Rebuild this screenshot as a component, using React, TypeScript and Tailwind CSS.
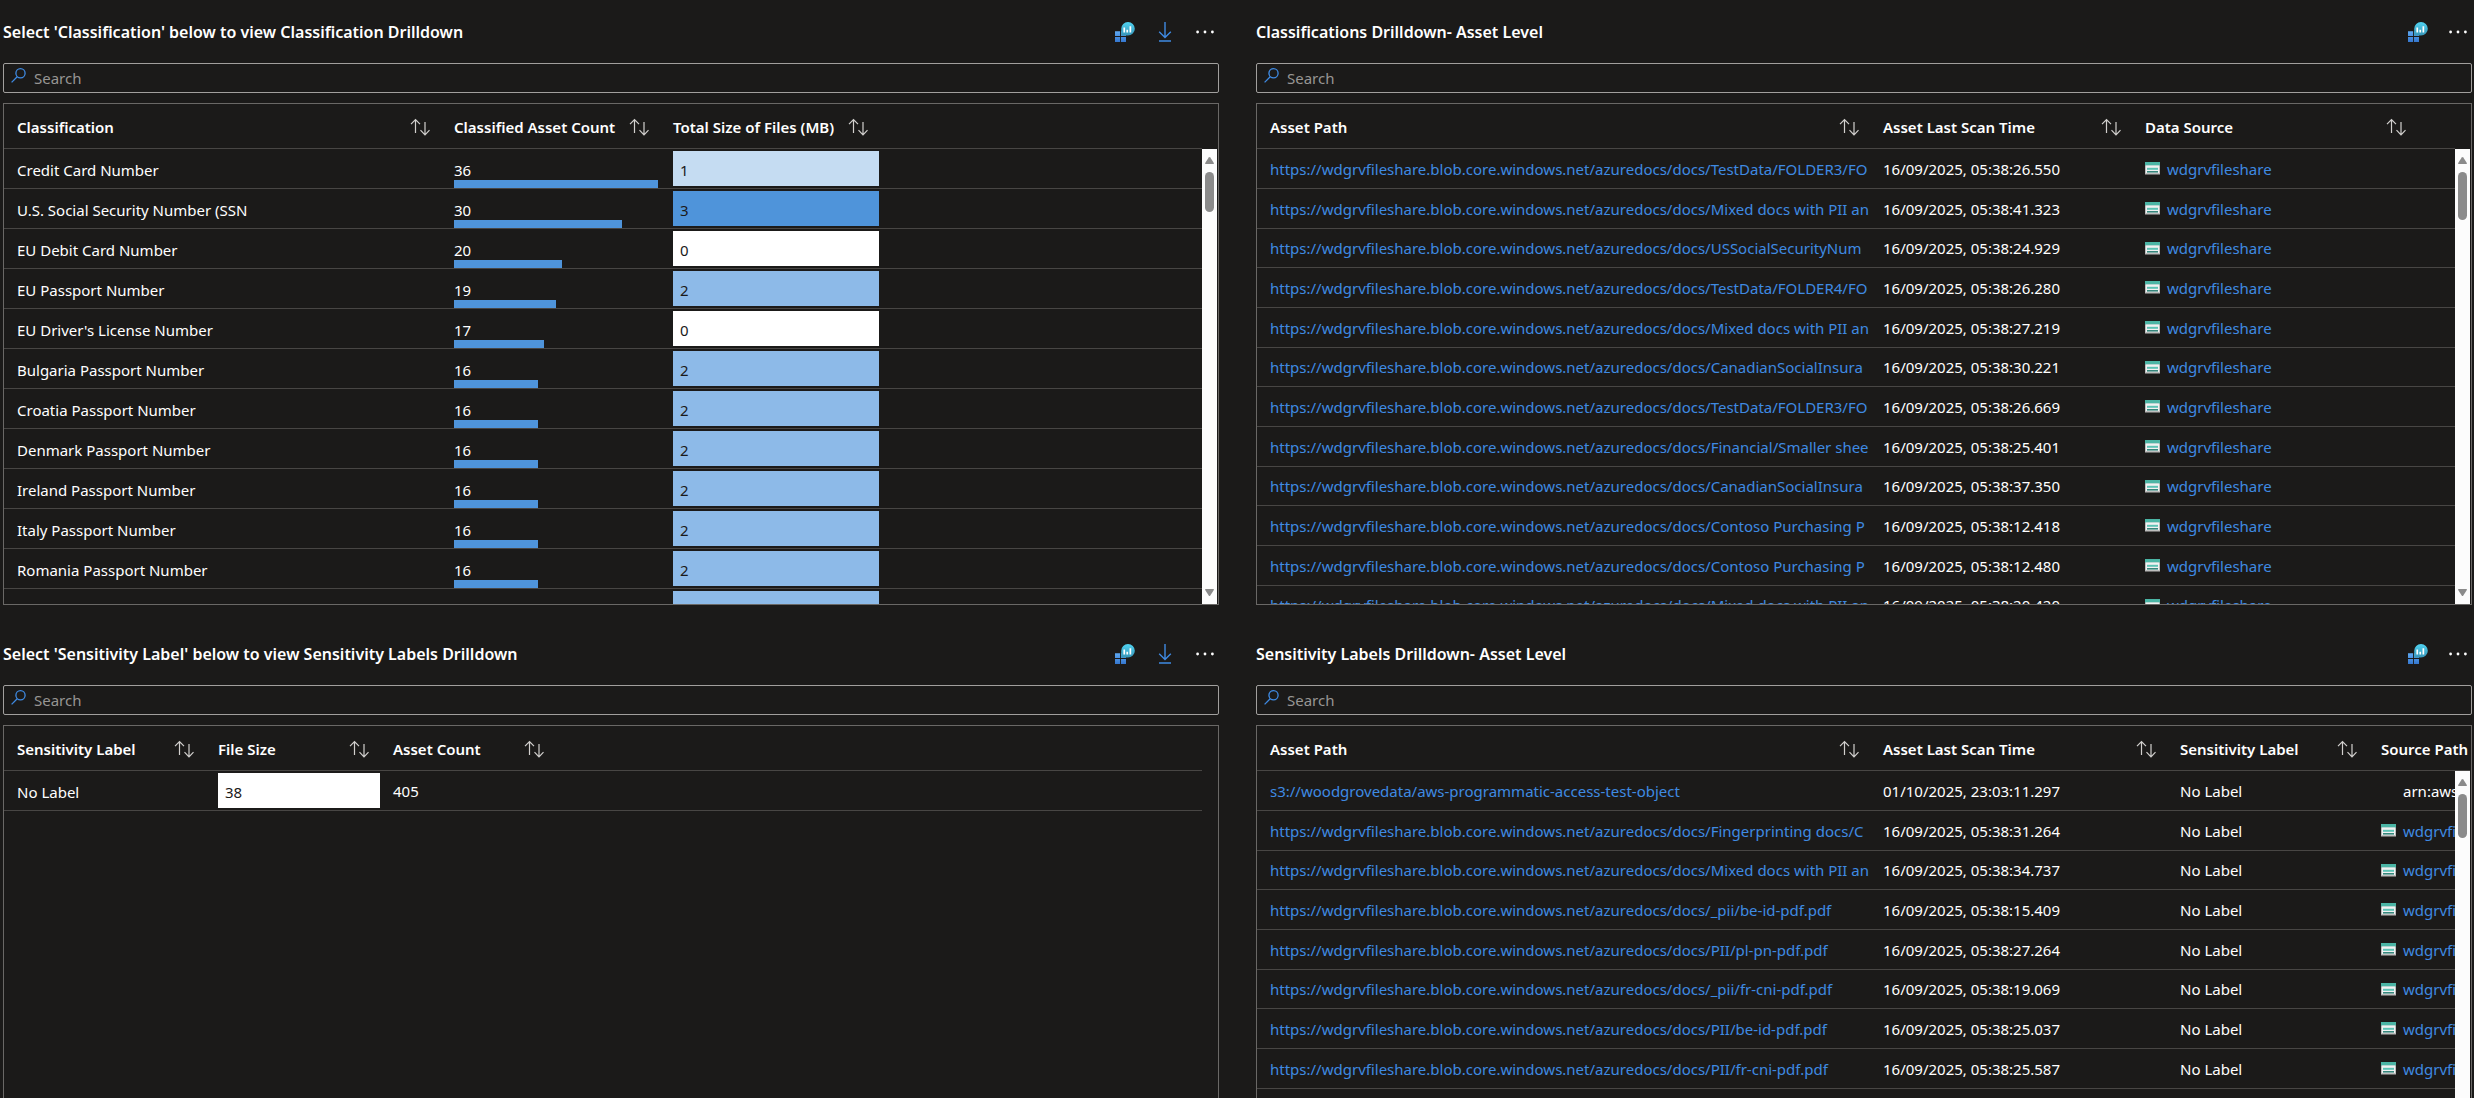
import type { ReactNode } from "react";

const BLOB = "https://wdgrvfileshare.blob.core.windows.net/azuredocs/docs/";

const classifications = [
  { name: "Credit Card Number", count: 36, size: 1 },
  { name: "U.S. Social Security Number (SSN", count: 30, size: 3 },
  { name: "EU Debit Card Number", count: 20, size: 0 },
  { name: "EU Passport Number", count: 19, size: 2 },
  { name: "EU Driver's License Number", count: 17, size: 0 },
  { name: "Bulgaria Passport Number", count: 16, size: 2 },
  { name: "Croatia Passport Number", count: 16, size: 2 },
  { name: "Denmark Passport Number", count: 16, size: 2 },
  { name: "Ireland Passport Number", count: 16, size: 2 },
  { name: "Italy Passport Number", count: 16, size: 2 },
  { name: "Romania Passport Number", count: 16, size: 2 },
];

const classifiedAssets = [
  { path: "TestData/FOLDER3/FO", time: "16/09/2025, 05:38:26.550" },
  { path: "Mixed docs with PII an", time: "16/09/2025, 05:38:41.323" },
  { path: "USSocialSecurityNum", time: "16/09/2025, 05:38:24.929" },
  { path: "TestData/FOLDER4/FO", time: "16/09/2025, 05:38:26.280" },
  { path: "Mixed docs with PII an", time: "16/09/2025, 05:38:27.219" },
  { path: "CanadianSocialInsura", time: "16/09/2025, 05:38:30.221" },
  { path: "TestData/FOLDER3/FO", time: "16/09/2025, 05:38:26.669" },
  { path: "Financial/Smaller shee", time: "16/09/2025, 05:38:25.401" },
  { path: "CanadianSocialInsura", time: "16/09/2025, 05:38:37.350" },
  { path: "Contoso Purchasing P", time: "16/09/2025, 05:38:12.418" },
  { path: "Contoso Purchasing P", time: "16/09/2025, 05:38:12.480" },
  { path: "Mixed docs with PII an", time: "16/09/2025, 05:38:20.420" },
];

const labelledAssets = [
  { path: "Fingerprinting docs/C", time: "16/09/2025, 05:38:31.264" },
  { path: "Mixed docs with PII an", time: "16/09/2025, 05:38:34.737" },
  { path: "_pii/be-id-pdf.pdf", time: "16/09/2025, 05:38:15.409" },
  { path: "PII/pl-pn-pdf.pdf", time: "16/09/2025, 05:38:27.264" },
  { path: "_pii/fr-cni-pdf.pdf", time: "16/09/2025, 05:38:19.069" },
  { path: "PII/be-id-pdf.pdf", time: "16/09/2025, 05:38:25.037" },
  { path: "PII/fr-cni-pdf.pdf", time: "16/09/2025, 05:38:25.587" },
];

const heat = ["bg-white", "bg-[#c5dcf2]", "bg-[#8dbae8]", "bg-[#4f94da]"];

function SortIcon() {
  return (
    <svg width="20" height="18" viewBox="0 0 20 18" fill="none" stroke="#d2d0ce" strokeWidth="1.2">
      <path d="M5.5 15V2M1 6.2 5.5 1.5 10 6.2" />
      <path d="M15 4v12.6M10.5 12.2 15 16.8l4.500-4.600" />
    </svg>
  );
}

function InsightsIcon() {
  return (
    <svg width="20" height="20" viewBox="0 0 20 20">
      <defs>
        <linearGradient id="bubble" x1="0" y1="0" x2="0" y2="1">
          <stop offset="0" stopColor="#50d4f2" />
          <stop offset="1" stopColor="#3795b8" />
        </linearGradient>
        <linearGradient id="tiles" x1="0" y1="0" x2="0" y2="1">
          <stop offset="0" stopColor="#5ea9f2" />
          <stop offset="1" stopColor="#3577cf" />
        </linearGradient>
      </defs>
      <path d="M0 9.200h5.100v4.900H0zM6 9.200h5v4.900H6zM0 15h5.100v5H0zM6 15h5v5H6z" fill="url(#tiles)" />
      <path d="M13 0a6.800 6.800 0 1 1 0 13.600H7.200c-.8 0-1.100-.5-1-1.200V6.800A6.800 6.800 0 0 1 13 0z" fill="url(#bubble)" />
      <path d="M8.400 5.600h1.700v5H8.400zM11.400 7.800h1.700v2.800h-1.700zM14.500 4.200h1.700v6.400h-1.700z" fill="#fff" />
    </svg>
  );
}

function DownloadIcon() {
  return (
    <svg width="14" height="20" viewBox="0 0 14 20" fill="none" stroke="#3f8ae2" strokeWidth="1.4">
      <path d="M7 0v15.500M1.200 9.800 7 15.600l5.800-5.800M1 19h12" />
    </svg>
  );
}

function MoreIcon() {
  return (
    <svg width="18" height="20" viewBox="0 0 18 20" fill="#fff">
      <circle cx="1.600" cy="10" r="1.400" />
      <circle cx="9" cy="10" r="1.400" />
      <circle cx="16.400" cy="10" r="1.400" />
    </svg>
  );
}

function StorageIcon() {
  return (
    <svg width="15" height="13" viewBox="0 0 15 13" className="shrink-0">
      <path d="M0 0h15v12.500H0z" fill="#bdbdbd" />
      <path d="M0 0h15v3.500H0z" fill="#4bb5a5" />
      <path d="M1 3.500h13v7.500H1z" fill="#f0f2f2" />
      <path d="M2 5.800h11v2H2z" fill="#5cc2b4" />
      <path d="M2 9h11v1.600H2z" fill="#37867c" />
    </svg>
  );
}

function Panel({ title, download, children }: { title: string; download?: boolean; children: ReactNode }) {
  return (
    <section className="flex min-w-0 flex-col">
      <header className="flex h-[63px] items-center justify-between pr-1">
        <h2 className="text-base font-semibold whitespace-nowrap">{title}</h2>
        <div className="flex gap-5">
          <button aria-label="Open in workbook" className="flex size-5 items-center justify-center"><InsightsIcon /></button>
          {download && (
            <button aria-label="Export" className="flex size-5 items-center justify-center"><DownloadIcon /></button>
          )}
          <button aria-label="More options" className="flex size-5 items-center justify-center"><MoreIcon /></button>
        </div>
      </header>
      <label className="flex h-[30px] items-center gap-2 rounded-xs border border-[#a19f9d] px-[7px]">
        <svg width="15" height="15" viewBox="0 0 15 15" fill="none" stroke="#3f8ae2" strokeWidth="1.300" className="mb-1.5 shrink-0">
          <circle cx="9.500" cy="5.300" r="4.600" />
          <path d="M6.200 8.700.6 14.400" />
        </svg>
        <input
          type="text"
          aria-label="Search"
          placeholder="Search"
          className="min-w-0 flex-1 bg-transparent text-[15px] leading-5 outline-none placeholder:text-[#979593]"
        />
      </label>
      <div className="relative mt-[10px] h-[502px] overflow-hidden border border-[#6a6866]">{children}</div>
    </section>
  );
}

type Column = { label: string; width?: string; sort?: boolean };

function Grid({ columns, wide, children }: { columns: Column[]; wide?: boolean; children: ReactNode }) {
  return (
    <div className={wide ? "mr-px" : "mr-4"}>
      <table className="w-full table-fixed border-separate border-spacing-0 text-[15px] leading-5">
        <thead>
          <tr>
            {columns.map((c, i) => (
              <th key={i} scope="col" className={`h-[45px] border-b border-[#484644] p-0 text-left font-semibold ${c.width ?? ""}`}>
                <div className="flex items-center justify-between pt-0.5 pr-[11px] pl-[13px] whitespace-nowrap">
                  {c.label}
                  {c.sort !== false && <button aria-label={`Sort by ${c.label}`}><SortIcon /></button>}
                </div>
              </th>
            ))}
          </tr>
        </thead>
        <tbody>{children}</tbody>
      </table>
    </div>
  );
}

function Cell({ children }: { children?: ReactNode }) {
  return <td className="h-10 overflow-hidden border-b border-[#484644] py-0 pr-0 pl-[13px] whitespace-nowrap">{children}</td>;
}

function TightRow({ children }: { children: ReactNode }) {
  return <tr className="nth-[3n]:*:h-[39px]">{children}</tr>;
}

function Link({ children }: { children: ReactNode }) {
  return <a href="#" className="text-[#3f8ae2]">{children}</a>;
}

function Source() {
  return (
    <div className="flex items-center gap-[7px]">
      <StorageIcon />
      <Link>wdgrvfileshare</Link>
    </div>
  );
}

function HeatCell({ value, tone }: { value?: ReactNode; tone: string }) {
  return <div className={`flex h-[35px] items-center pt-0.5 pl-[7px] text-[#1b1a19] ${tone}`}>{value}</div>;
}

function CountBar({ count }: { count: number }) {
  return (
    <div className="flex h-[38px] flex-col justify-end">
      <span>{count}</span>
      <div className="h-2 bg-[#4f94da]" style={{ width: count * 6 - 12 }} />
    </div>
  );
}

function Scrollbar({ thumb }: { thumb: string }) {
  return (
    <div aria-hidden="true" className="absolute top-[45px] right-px bottom-0 flex w-[15px] flex-col items-center justify-between bg-[#fcfcfc] py-2">
      <div className="flex flex-col items-center gap-2">
        <svg width="9" height="7" viewBox="0 0 9 7" fill="#8b8b8b"><path d="M3.700.6a1 1 0 0 1 1.600 0L9 6.200q0 .8-.8.8H.8Q0 7 0 6.200z" /></svg>
        <div className={`w-[9px] rounded-full bg-[#8b8b8b] ${thumb}`} />
      </div>
      <svg width="9" height="7" viewBox="0 0 9 7" fill="#8b8b8b"><path d="M3.700 6.400a1 1 0 0 0 1.600 0L9 .8Q9 0 8.200 0H.8Q0 0 0 .8z" /></svg>
    </div>
  );
}

export default function App() {
  return (
    <main className="grid h-screen auto-rows-max grid-cols-2 gap-x-[37px] gap-y-[17px] overflow-hidden bg-[#1b1a19] pr-[2px] pl-[3px] font-['Noto_Sans',sans-serif] text-white">
      <Panel title="Select 'Classification' below to view Classification Drilldown" download>
        <Grid
          columns={[
            { label: "Classification", width: "w-[437px]" },
            { label: "Classified Asset Count", width: "w-[219px]" },
            { label: "Total Size of Files (MB)", width: "w-[219px]" },
            { label: "", sort: false },
          ]}
        >
          {classifications.map((r) => (
            <tr key={r.name}>
              <Cell><div className="pt-0.5">{r.name}</div></Cell>
              <Cell><CountBar count={r.count} /></Cell>
              <Cell><HeatCell value={r.size} tone={heat[r.size]} /></Cell>
              <Cell />
            </tr>
          ))}
          <tr>
            <Cell />
            <Cell />
            <Cell><HeatCell tone={heat[2]} /></Cell>
            <Cell />
          </tr>
        </Grid>
        <Scrollbar thumb="h-10" />
      </Panel>

      <Panel title="Classifications Drilldown- Asset Level">
        <Grid
          columns={[
            { label: "Asset Path", width: "w-[613px]" },
            { label: "Asset Last Scan Time", width: "w-[262px]" },
            { label: "Data Source", width: "w-[285px]" },
            { label: "", sort: false },
          ]}
        >
          {classifiedAssets.map((r, i) => (
            <TightRow key={i}>
              <Cell><Link>{BLOB + r.path}</Link></Cell>
              <Cell>{r.time}</Cell>
              <Cell><Source /></Cell>
              <Cell />
            </TightRow>
          ))}
        </Grid>
        <Scrollbar thumb="h-12" />
      </Panel>

      <Panel title="Select 'Sensitivity Label' below to view Sensitivity Labels Drilldown" download>
        <Grid
          columns={[
            { label: "Sensitivity Label", width: "w-[201px]" },
            { label: "File Size", width: "w-[175px]" },
            { label: "Asset Count", width: "w-[175px]" },
            { label: "", sort: false },
          ]}
        >
          <tr>
            <Cell><div className="pt-0.5">No Label</div></Cell>
            <Cell><HeatCell value={38} tone="bg-white" /></Cell>
            <Cell>405</Cell>
            <Cell />
          </tr>
        </Grid>
      </Panel>

      <Panel title="Sensitivity Labels Drilldown- Asset Level">
        <Grid
          wide
          columns={[
            { label: "Asset Path", width: "w-[613px]" },
            { label: "Asset Last Scan Time", width: "w-[297px]" },
            { label: "Sensitivity Label", width: "w-[201px]" },
            { label: "Source Path", sort: false },
          ]}
        >
          <TightRow>
            <Cell><Link>s3://woodgrovedata/aws-programmatic-access-test-object</Link></Cell>
            <Cell>01/10/2025, 23:03:11.297</Cell>
            <Cell>No Label</Cell>
            <Cell><div className="pl-[22px]">arn:aws</div></Cell>
          </TightRow>
          {labelledAssets.map((r, i) => (
            <TightRow key={i}>
              <Cell><Link>{BLOB + r.path}</Link></Cell>
              <Cell>{r.time}</Cell>
              <Cell>No Label</Cell>
              <Cell><Source /></Cell>
            </TightRow>
          ))}
        </Grid>
        <Scrollbar thumb="h-11" />
      </Panel>
    </main>
  );
}
